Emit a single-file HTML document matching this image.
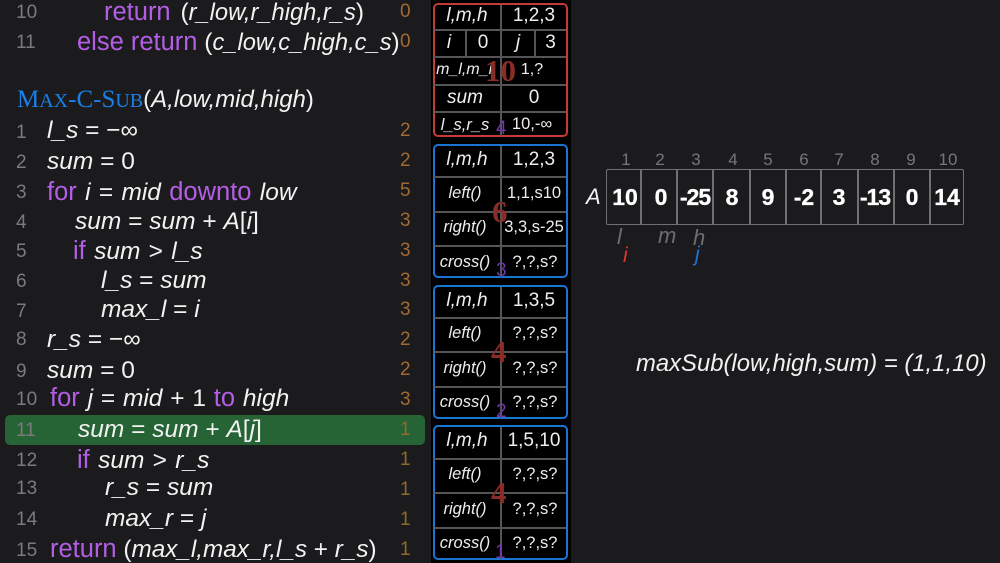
<!DOCTYPE html>
<html><head><meta charset="utf-8"><style>
html,body{margin:0;padding:0;background:#1b1b1d;overflow:hidden}
body{width:1000px;height:563px;overflow:hidden;position:relative;font-family:"Liberation Sans",sans-serif;color:#f2f2f2}
#w{position:absolute;left:0;top:0;width:1000px;height:563px;overflow:hidden;filter:blur(.35px);background:#1b1b1d}
.t{position:absolute;white-space:pre;line-height:30px;height:30px;font-size:24.5px}
.i{font-style:italic}
i{font-style:italic}
b{font-weight:normal;color:#b45ee6;font-style:normal;font-size:25.5px}
.n{color:#7b7b7e;font-size:19px;left:16px}
.c{color:#a26a32;font-size:19px;left:400px}
.c1{color:#8d6b2c}
.x{position:absolute;background:#555557}
.h{left:434px;width:132px;height:1.5px}
.y{left:500px;width:1.5px}
.p{position:absolute;left:433px;width:131px;border:2px solid #1a74d2;border-radius:5px;height:130px;box-sizing:content-box}
.l{position:absolute;text-align:center;white-space:pre;line-height:30px;height:30px;font-size:19px;color:#eee;margin-top:1px}
.s{font-size:16.5px;margin-top:0}
.big{position:absolute;font-weight:bold;font-family:"Liberation Serif",serif;color:#8a2c27;line-height:30px;font-size:31px}
.pur{position:absolute;color:#7038a8;font-size:19px;line-height:20px}
.idx{position:absolute;top:150px;width:36px;text-align:center;color:#77777a;font-size:17px;line-height:20px}
.v{position:absolute;top:182px;width:36px;text-align:center;color:#fff;font:bold 23px/30px "Liberation Sans",sans-serif;-webkit-text-stroke:.3px #fff}
.a{position:absolute;top:169px;width:1.5px;height:56px;background:#707072}
.q i{font-size:23.7px}
</style></head><body><div id="w">
<div style="position:absolute;left:431px;top:0;width:140px;height:563px;background:#000"></div>
<div style="position:absolute;left:5px;top:415px;width:420px;height:30px;background:#266335;border-radius:5px"></div>

<div class="t n" style="top:-2px">10</div><div class="t q" style="left:104px;top:-3px"><b>return</b> <span style="margin-left:3px">(</span><i>r_low,r_high,r_s</i>)</div><div class="t c" style="top:-3px">0</div>
<div class="t n" style="top:28px">11</div><div class="t q" style="left:77px;top:27px"><b>else return</b> (<i>c_low,c_high,c_s</i>)</div><div class="t c" style="top:27px">0</div>
<div class="t" style="left:17px;top:85px;font-family:'Liberation Serif',serif;color:#1a7fe6"><span style="font-size:25px">M</span><span style="font-size:20px">AX</span><span style="font-size:25px">-C-S</span><span style="font-size:20px">UB</span><span style="color:#f2f2f2;font-family:'Liberation Sans',sans-serif;font-size:24px">(<i>A,low,mid,high</i>)</span></div>

<div class="t n" style="top:118px">1</div><div class="t" style="left:47px;top:116px"><i>l_s</i> = −∞</div><div class="t c" style="top:116px">2</div>
<div class="t n" style="top:148px">2</div><div class="t" style="left:47px;top:147px"><i>sum</i> = 0</div><div class="t c" style="top:146px">2</div>
<div class="t n" style="top:178px">3</div><div class="t" style="left:47px;top:177px;word-spacing:1.5px"><b>for</b> <i>i</i> = <i>mid</i> <b>downto</b> <i>low</i></div><div class="t c" style="top:176px">5</div>
<div class="t n" style="top:208px">4</div><div class="t" style="left:75px;top:207px"><i>sum</i> = <i>sum</i> + <i>A</i>[<i>i</i>]</div><div class="t c" style="top:206px">3</div>
<div class="t n" style="top:237px">5</div><div class="t" style="left:73px;top:236px;word-spacing:1.5px"><b>if</b> <i>sum</i> &gt; <i>l_s</i></div><div class="t c" style="top:236px">3</div>
<div class="t n" style="top:267px">6</div><div class="t" style="left:101px;top:266px"><i>l_s</i> = <i>sum</i></div><div class="t c" style="top:266px">3</div>
<div class="t n" style="top:297px">7</div><div class="t" style="left:101px;top:295px"><i>max_l</i> = <i>i</i></div><div class="t c" style="top:295px">3</div>
<div class="t n" style="top:325px">8</div><div class="t" style="left:47px;top:325px"><i>r_s</i> = −∞</div><div class="t c" style="top:325px">2</div>
<div class="t n" style="top:357px">9</div><div class="t" style="left:47px;top:356px"><i>sum</i> = 0</div><div class="t c" style="top:355px">2</div>
<div class="t n" style="top:385px">10</div><div class="t" style="left:50px;top:383px;word-spacing:1px"><b>for</b> <i>j</i> = <i>mid</i> + 1 <b>to</b> <i>high</i></div><div class="t c" style="top:385px">3</div>
<div class="t n" style="top:416px">11</div><div class="t" style="left:78px;top:415px"><i>sum</i> = <i>sum</i> + <i>A</i>[<i>j</i>]</div><div class="t c c1" style="top:415px">1</div>
<div class="t n" style="top:446px">12</div><div class="t" style="left:77px;top:445px;word-spacing:1.5px"><b>if</b> <i>sum</i> &gt; <i>r_s</i></div><div class="t c c1" style="top:445px">1</div>
<div class="t n" style="top:474px">13</div><div class="t" style="left:105px;top:473px"><i>r_s</i> = <i>sum</i></div><div class="t c c1" style="top:475px">1</div>
<div class="t n" style="top:505px">14</div><div class="t" style="left:105px;top:504px"><i>max_r</i> = <i>j</i></div><div class="t c c1" style="top:505px">1</div>
<div class="t n" style="top:536px">15</div><div class="t" style="left:50px;top:534px;font-size:24.3px"><b>return</b> (<i>max_l,max_r,l_s</i> + <i>r_s</i>)</div><div class="t c c1" style="top:535px">1</div>

<!-- red panel -->
<div class="p" style="top:3px;border-color:#c43a34"></div>
<div class="x y" style="top:5px;height:131px"></div>
<div class="x h" style="top:29px"></div>
<div class="x h" style="top:56px"></div>
<div class="x h" style="top:84px"></div>
<div class="x h" style="top:111px"></div>
<div class="x" style="left:465px;top:30px;width:1.5px;height:26px"></div>
<div class="x" style="left:534px;top:30px;width:1.5px;height:26px"></div>
<div class="l i" style="left:434px;width:66px;top:0">l,m,h</div><div class="l" style="left:502px;width:64px;top:0">1,2,3</div>
<div class="l i" style="left:434px;width:30px;top:27px">i</div><div class="l" style="left:466px;width:34px;top:27px">0</div><div class="l i" style="left:502px;width:32px;top:27px">j</div><div class="l" style="left:535px;width:31px;top:27px">3</div>
<div class="l i" style="left:432px;width:66px;top:55px;font-size:16px;margin-top:0">m_l,m_r</div><div class="l" style="left:502px;width:60px;top:55px;font-size:16px;margin-top:0">1,?</div>
<div class="l i" style="left:434px;width:62px;top:82px">sum</div><div class="l" style="left:502px;width:64px;top:82px">0</div>
<div class="l i s" style="left:434px;width:62px;top:110px">l_s,r_s</div><div class="l s" style="left:502px;width:60px;top:109px">10,-∞</div>

<!-- blue 1 -->
<div class="p" style="top:144px"></div>
<div class="x y" style="top:146px;height:131px"></div>
<div class="x h" style="top:176px"></div>
<div class="x h" style="top:211px"></div>
<div class="x h" style="top:245px"></div>
<div class="l i" style="left:434px;width:66px;top:144px">l,m,h</div><div class="l" style="left:502px;width:64px;top:144px">1,2,3</div>
<div class="l i s" style="left:432px;width:66px;top:178px">left()</div><div class="l s" style="left:502px;width:64px;top:178px">1,1,s10</div>
<div class="l i s" style="left:432px;width:66px;top:212px">right()</div><div class="l s" style="left:501px;width:66px;top:212px">3,3,s-25</div>
<div class="l i s" style="left:432px;width:66px;top:247px">cross()</div><div class="l s" style="left:502px;width:66px;top:247px">?,?,s?</div>

<!-- blue 2 -->
<div class="p" style="top:285px"></div>
<div class="x y" style="top:287px;height:131px"></div>
<div class="x h" style="top:317px"></div>
<div class="x h" style="top:351px"></div>
<div class="x h" style="top:386px"></div>
<div class="l i" style="left:434px;width:66px;top:285px">l,m,h</div><div class="l" style="left:502px;width:64px;top:285px">1,3,5</div>
<div class="l i s" style="left:432px;width:66px;top:318px">left()</div><div class="l s" style="left:502px;width:66px;top:318px">?,?,s?</div>
<div class="l i s" style="left:432px;width:66px;top:353px">right()</div><div class="l s" style="left:502px;width:66px;top:353px">?,?,s?</div>
<div class="l i s" style="left:432px;width:66px;top:387px">cross()</div><div class="l s" style="left:502px;width:66px;top:387px">?,?,s?</div>

<!-- blue 3 -->
<div class="p" style="top:425px;height:131px"></div>
<div class="x y" style="top:427px;height:132px"></div>
<div class="x h" style="top:458px"></div>
<div class="x h" style="top:492px"></div>
<div class="x h" style="top:527px"></div>
<div class="l i" style="left:434px;width:66px;top:425px">l,m,h</div><div class="l" style="left:502px;width:64px;top:425px">1,5,10</div>
<div class="l i s" style="left:432px;width:66px;top:459px">left()</div><div class="l s" style="left:502px;width:66px;top:459px">?,?,s?</div>
<div class="l i s" style="left:432px;width:66px;top:494px">right()</div><div class="l s" style="left:502px;width:66px;top:494px">?,?,s?</div>
<div class="l i s" style="left:432px;width:66px;top:528px">cross()</div><div class="l s" style="left:502px;width:66px;top:528px">?,?,s?</div>

<div class="big" style="left:485px;top:56px;font-size:31px">10</div>
<div class="big" style="left:492px;top:197px">6</div>
<div class="big" style="left:491px;top:337px">4</div>
<div class="big" style="left:491px;top:478px">4</div>
<div class="pur" style="left:496px;top:119px">4</div>
<div class="pur" style="left:496px;top:261px">3</div>
<div class="pur" style="left:496px;top:402px">2</div>
<div class="pur" style="left:495px;top:543px">1</div>

<!-- array -->
<div class="idx" style="left:608px">1</div><div class="idx" style="left:642px">2</div><div class="idx" style="left:678px">3</div><div class="idx" style="left:715px">4</div><div class="idx" style="left:750px">5</div><div class="idx" style="left:786px">6</div><div class="idx" style="left:821px">7</div><div class="idx" style="left:857px">8</div><div class="idx" style="left:893px">9</div><div class="idx" style="left:930px">10</div>
<div style="position:absolute;left:606px;top:169px;width:358px;height:56px;box-sizing:border-box;border:1.5px solid #707072;border-radius:2px"></div>
<div class="a" style="left:640px"></div>
<div class="a" style="left:676px"></div>
<div class="a" style="left:712px"></div>
<div class="a" style="left:749px"></div>
<div class="a" style="left:785px"></div>
<div class="a" style="left:820px"></div>
<div class="a" style="left:857px"></div>
<div class="a" style="left:893px"></div>
<div class="a" style="left:929px"></div>
<div class="t i" style="left:586px;top:182px;font-size:22px">A</div>
<div class="v" style="left:607px">10</div><div class="v" style="left:643px">0</div><div class="v" style="left:677px;letter-spacing:-1px">-25</div><div class="v" style="left:714px">8</div><div class="v" style="left:750px">9</div><div class="v" style="left:786px">-2</div><div class="v" style="left:821px">3</div><div class="v" style="left:857px;letter-spacing:-1px">-13</div><div class="v" style="left:894px">0</div><div class="v" style="left:929px">14</div>
<div class="t i" style="left:617px;top:222px;font-size:22px;color:#6e6e70">l</div>
<div class="t i" style="left:658px;top:221px;font-size:22px;color:#6e6e70">m</div>
<div class="t i" style="left:693px;top:223px;font-size:22px;color:#6e6e70">h</div>
<div class="t i" style="left:623px;top:241px;font-size:21px;color:#e0362e">i</div>
<div class="t i" style="left:695px;top:240px;font-size:21px;color:#1a74d8">j</div>

<div class="t i" style="left:636px;top:349px;font-size:23.85px">maxSub(low,high,sum) = (1,1,10)</div>
</div></body></html>
